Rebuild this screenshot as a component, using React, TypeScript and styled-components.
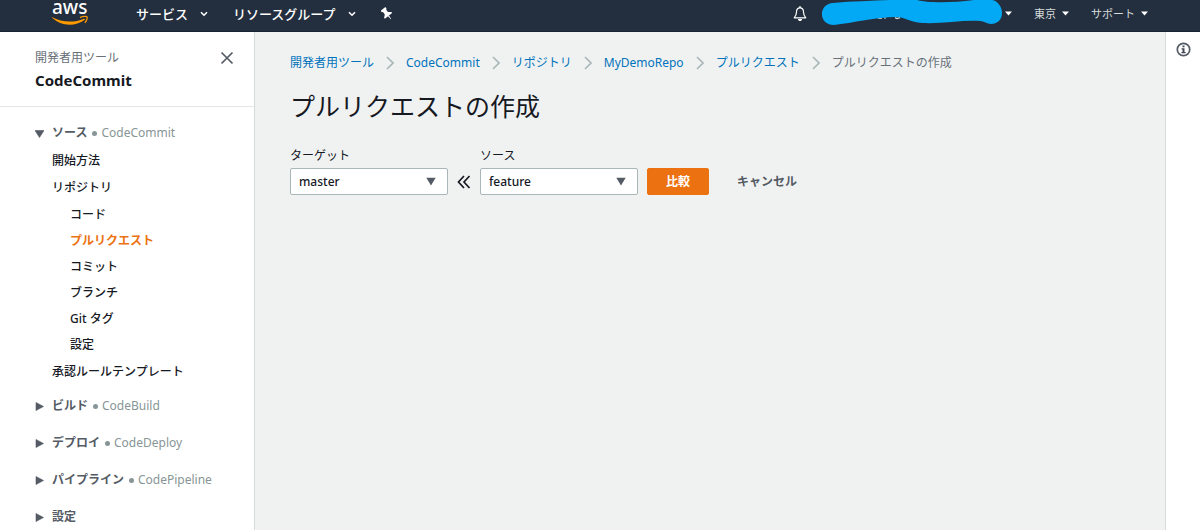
import React, { useState } from "react";
import styled, { createGlobalStyle } from "styled-components";

const GlobalStyle = createGlobalStyle`
  * { box-sizing: border-box; }
  body {
    margin: 0;
    background: #f0f2f2;
    color: #16191f;
    font: 12px/18px "Noto Sans", "Noto Sans CJK JP", sans-serif;
  }
  button, select { font: inherit; color: inherit; }
  a { color: inherit; text-decoration: none; }
  svg { display: block; flex: none; }
  ul, ol { list-style: none; margin: 0; padding: 0; }
`;

const Page = styled.div`
  display: flex;
  flex-direction: column;
  min-height: 100vh;
`;

const TopBar = styled.header`
  display: flex;
  align-items: center;
  flex: none;
  padding: 0 52px 4px;
  height: 32px;
  background: #232f3e;
  border-bottom: 1px solid #1a2430;
  color: #fff;
`;

const HomeLink = styled.a`
  margin-right: 48px;
`;

const MenuButton = styled.button<{ $small?: boolean; $gap?: number }>`
  display: flex;
  align-items: center;
  gap: ${(p) => p.$gap ?? (p.$small ? 6 : 12)}px;
  padding: 0;
  border: 0;
  background: none;
  color: ${(p) => (p.$small ? "#d5dbdb" : "#fff")};
  font-size: ${(p) => (p.$small ? 11 : 13)}px;
  font-weight: ${(p) => (p.$small ? 400 : 500)};
  white-space: nowrap;
`;

const MainMenu = styled.nav`
  display: flex;
  align-items: center;
  gap: 25px;
  flex: 1;
`;

const AccountMenu = styled.nav`
  display: flex;
  align-items: center;
  gap: 22px;
`;

const AccountGroup = styled.div`
  display: flex;
  align-items: center;
  gap: 15px;
`;

const IconButton = styled.button`
  padding: 0;
  border: 0;
  background: none;
`;

const Body = styled.div`
  display: flex;
  flex: 1;
`;

const Sidebar = styled.aside`
  flex: none;
  width: 255px;
  background: #fff;
  border-right: 1px solid #d5dbdb;
`;

const SidebarHead = styled.div`
  display: flex;
  justify-content: space-between;
  align-items: flex-start;
  padding: 16px 20px 14px 35px;
  border-bottom: 1px solid #e3e7e7;
`;

const Suite = styled.div`
  color: #687078;
  line-height: 20px;
`;

const Service = styled.div`
  font-size: 15px;
  line-height: 24px;
  font-weight: 700;
`;

const CloseButton = styled(IconButton)`
  padding: 3px 0;
`;

const Tree = styled.nav`
  display: flex;
  flex-direction: column;
  gap: 17px;
  padding: 16px 0 0 35px;
`;

const SectionButton = styled.button`
  display: flex;
  align-items: center;
  gap: 8px;
  padding: 0;
  border: 0;
  background: none;
  height: 20px;
  color: #545b64;
  font-weight: 700;
`;

const Section = styled.div``;

const SectionLabel = styled.span`
  display: flex;
  gap: 5px;
`;

const Product = styled.span`
  display: flex;
  align-items: center;
  gap: 4px;
  color: #879596;
  font-weight: 400;

  &::before {
    content: "";
    width: 5px;
    height: 5px;
    border-radius: 50%;
    background: #879596;
  }
`;

const Items = styled.ul`
  padding: 4px 0 0 17px;
  line-height: 27px;
  margin-bottom: -6px;
`;

const SubItems = styled.ul`
  padding: 1px 0 0 18px;
  line-height: 26px;
`;

const ItemLink = styled.a<{ $active?: boolean }>`
  display: block;
  color: ${(p) => (p.$active ? "#ec7211" : "#16191f")};
  font-weight: ${(p) => (p.$active ? 700 : 500)};
`;

const Main = styled.main`
  flex: 1;
  min-width: 0;
  padding: 20px 35px;
`;

const Crumbs = styled.ol`
  display: flex;
  align-items: center;
  line-height: 22px;
  color: #687078;
`;

const Crumb = styled.li`
  display: flex;
  align-items: center;
  white-space: nowrap;
`;

const CrumbLink = styled.a`
  color: #0073bb;
`;

const CrumbArrow = styled.svg`
  margin: 0 12px;
`;

const Title = styled.h1`
  margin: 14px 0 23px;
  font-size: 25px;
  line-height: 36px;
  font-weight: 400;
`;

const CompareForm = styled.form`
  display: flex;
  align-items: flex-end;
  gap: 9px;
`;

const Field = styled.label`
  display: flex;
  flex-direction: column;
  gap: 3px;
`;

const SelectBox = styled.span`
  position: relative;
  display: block;

  svg {
    position: absolute;
    right: 12px;
    top: 9px;
    pointer-events: none;
  }
`;

const Select = styled.select`
  appearance: none;
  display: block;
  width: 158px;
  height: 27px;
  padding: 0 28px 0 8px;
  border: 1px solid #aab7b8;
  border-radius: 2px;
  background: #fff;
  font-weight: 500;
`;

const DirectionMark = styled.span`
  display: flex;
  align-items: center;
  height: 27px;
`;

const Button = styled.button<{ $primary?: boolean }>`
  height: 27px;
  padding: 0 18px;
  border: 1px solid ${(p) => (p.$primary ? "#ec7211" : "transparent")};
  border-radius: 2px;
  background: ${(p) => (p.$primary ? "#ec7211" : "transparent")};
  color: ${(p) => (p.$primary ? "#fff" : "#545b64")};
  font-weight: 700;
`;

const HelpRail = styled.aside`
  flex: none;
  width: 35px;
  padding: 10px 0 0 10px;
  background: #fff;
  border-left: 1px solid #d5dbdb;
`;

const AwsLogo = () => (
  <svg width="36" height="27" viewBox="0 0 36 27" overflow="visible" aria-label="aws">
    <text x="0" y="14" fontFamily="Noto Sans, sans-serif" fontSize="19" fontWeight="500" fill="#fff">aws</text>
    <path d="M0.3 17.2C9 22 21 23.4 32 18.8C32.8 18.5 33.4 19.3 32.6 19.9C23 26.8 9 26.2 0.1 17.8C-0.3 17.4 0 17 0.3 17.2Z" fill="#f90" />
    <path d="M28 17.6C30.5 16.1 34.6 16.1 35.1 16.8C35.6 17.6 34.6 21.2 32.8 22.8" fill="none" stroke="#f90" strokeWidth="1.3" />
  </svg>
);

const Chevron = () => (
  <svg width="8" height="6" viewBox="0 0 8 6">
    <path d="M1 1.2L4 4.2L7 1.2" fill="none" stroke="#fff" strokeWidth="1.6" />
  </svg>
);

const Caret = () => (
  <svg width="7" height="5" viewBox="0 0 7 5">
    <path d="M0 0.5H7L3.5 4.5Z" fill="#fff" />
  </svg>
);

const Pin = () => (
  <svg width="12" height="14" viewBox="0 0 12 14">
    <g transform="rotate(-38 6 7)" fill="#fff">
      <path d="M3 0.5H9V2.4L8 3V6L10.6 8.2V9.4H1.4V8.2L4 6V3L3 2.4Z" />
      <path d="M5.3 9.4H6.7L6.2 13.6H5.8Z" />
    </g>
  </svg>
);

const Bell = () => (
  <svg width="14" height="16" viewBox="0 0 14 16">
    <path d="M7 1.8C4.4 1.8 3.5 3.8 3.5 6C3.5 9 2.6 10 1.2 11.8H12.8C11.4 10 10.5 9 10.5 6C10.5 3.8 9.6 1.8 7 1.8Z" fill="none" stroke="#fff" strokeWidth="1.2" strokeLinejoin="round" />
    <path d="M7 0.3V2" stroke="#fff" strokeWidth="1.6" />
    <path d="M5 13H9C9 14.4 8.2 15 7 15S5 14.4 5 13Z" fill="#fff" />
  </svg>
);

const AccountName = () => (
  <svg width="180" height="27" viewBox="0 0 180 27">
    <path d="M56 18.2H60M62 18H64M73 17.6L75 18.6L78 17.6" fill="none" stroke="#d5dbdb" strokeWidth="1.2" />
    <path d="M11 3C30 1 50 1 68 0H95C105 3 130 3 152 0H170C176 1 180 7 180 13C180 20 175 24 169 24C165 24 162 21 158 21C140 20 120 24 100 23C88 22 83 17 74 17C55 17 30 23 12 25C-4 25-4 4 11 3Z" fill="#03a9f4" />
  </svg>
);

const Close = () => (
  <svg width="14" height="14" viewBox="0 0 14 14">
    <path d="M1.5 1.5L12.5 12.5M12.5 1.5L1.5 12.5" stroke="#545b64" strokeWidth="1.7" />
  </svg>
);

const Triangle = ({ open }: { open?: boolean }) => (
  <svg width="9" height="9" viewBox="0 0 9 9">
    <path d={open ? "M0 1.5H9L4.5 8.5Z" : "M1 0.5V8.5L8.5 4.5Z"} fill="#545b64" stroke="#545b64" strokeWidth="0.6" />
  </svg>
);

const Info = () => (
  <svg width="15" height="15" viewBox="0 0 15 15">
    <circle cx="7.5" cy="7.5" r="6.2" fill="none" stroke="#545b64" strokeWidth="1.7" />
    <path d="M6.5 3.4H8.5V5.2H6.5ZM5.5 6.2H8.5V10H9.6V11.3H5.4V10H6.5V7.5H5.5Z" fill="#414750" />
  </svg>
);

const DoubleArrow = () => (
  <svg width="14" height="14" viewBox="0 0 14 14">
    <path d="M7 1L1.5 7L7 13M12.5 1L7 7L12.5 13" fill="none" stroke="#16191f" strokeWidth="1.7" />
  </svg>
);

const crumbs = ["開発者用ツール", "CodeCommit", "リポジトリ", "MyDemoRepo", "プルリクエスト"];
const repositoryPages = ["コード", "プルリクエスト", "コミット", "ブランチ", "Git タグ", "設定"];
const otherSections = [
  { label: "ビルド", product: "CodeBuild" },
  { label: "デプロイ", product: "CodeDeploy" },
  { label: "パイプライン", product: "CodePipeline" },
  { label: "設定" },
];

type SectionTitleProps = { label: string; product?: string; open?: boolean };

const SectionTitle = ({ label, product, open }: SectionTitleProps) => (
  <SectionButton type="button" aria-expanded={!!open}>
    <Triangle open={open} />
    <SectionLabel>
      {label}
      {product && <Product>{product}</Product>}
    </SectionLabel>
  </SectionButton>
);

type BranchFieldProps = { label: string; value: string; onChange: (v: string) => void };

const BranchField = ({ label, value, onChange }: BranchFieldProps) => (
  <Field>
    {label}
    <SelectBox>
      <Select value={value} onChange={(e) => onChange(e.target.value)}>
        <option>master</option>
        <option>feature</option>
      </Select>
      <svg width="10" height="9" viewBox="0 0 10 9">
        <path d="M0.3 0.8H9.7L5 8.4Z" fill="#545b64" />
      </svg>
    </SelectBox>
  </Field>
);

export default function App() {
  const [target, setTarget] = useState("master");
  const [source, setSource] = useState("feature");

  return (
    <Page>
      <GlobalStyle />
      <TopBar>
        <HomeLink href="#"><AwsLogo /></HomeLink>
        <MainMenu>
          <MenuButton type="button">サービス<Chevron /></MenuButton>
          <MenuButton type="button">リソースグループ<Chevron /></MenuButton>
          <IconButton type="button" aria-label="ピン留め"><Pin /></IconButton>
        </MainMenu>
        <AccountMenu>
          <AccountGroup>
            <IconButton type="button" aria-label="通知"><Bell /></IconButton>
            <MenuButton type="button" $small $gap={3} aria-label="アカウント"><AccountName /><Caret /></MenuButton>
          </AccountGroup>
          <MenuButton type="button" $small>東京<Caret /></MenuButton>
          <MenuButton type="button" $small>サポート<Caret /></MenuButton>
        </AccountMenu>
      </TopBar>
      <Body>
        <Sidebar>
          <SidebarHead>
            <div>
              <Suite>開発者用ツール</Suite>
              <Service>CodeCommit</Service>
            </div>
            <CloseButton type="button" aria-label="閉じる"><Close /></CloseButton>
          </SidebarHead>
          <Tree>
            <Section>
              <SectionTitle label="ソース" product="CodeCommit" open />
              <Items>
                <li><ItemLink href="#">開始方法</ItemLink></li>
                <li>
                  <ItemLink href="#">リポジトリ</ItemLink>
                  <SubItems>
                    {repositoryPages.map((page) => (
                      <li key={page}>
                        <ItemLink href="#" $active={page === "プルリクエスト"}>{page}</ItemLink>
                      </li>
                    ))}
                  </SubItems>
                </li>
                <li><ItemLink href="#">承認ルールテンプレート</ItemLink></li>
              </Items>
            </Section>
            {otherSections.map((s) => (
              <Section key={s.label}>
                <SectionTitle label={s.label} product={s.product} />
              </Section>
            ))}
          </Tree>
        </Sidebar>
        <Main>
          <Crumbs>
            {crumbs.map((name) => (
              <Crumb key={name}>
                <CrumbLink href="#">{name}</CrumbLink>
                <CrumbArrow width="8" height="14" viewBox="0 0 8 14">
                  <path d="M1 1L7 7L1 13" fill="none" stroke="#aab7b8" strokeWidth="1.6" />
                </CrumbArrow>
              </Crumb>
            ))}
            <Crumb>プルリクエストの作成</Crumb>
          </Crumbs>
          <Title>プルリクエストの作成</Title>
          <CompareForm onSubmit={(e) => e.preventDefault()}>
            <BranchField label="ターゲット" value={target} onChange={setTarget} />
            <DirectionMark><DoubleArrow /></DirectionMark>
            <BranchField label="ソース" value={source} onChange={setSource} />
            <Button type="submit" $primary>比較</Button>
            <Button type="button">キャンセル</Button>
          </CompareForm>
        </Main>
        <HelpRail>
          <IconButton type="button" aria-label="情報"><Info /></IconButton>
        </HelpRail>
      </Body>
    </Page>
  );
}
